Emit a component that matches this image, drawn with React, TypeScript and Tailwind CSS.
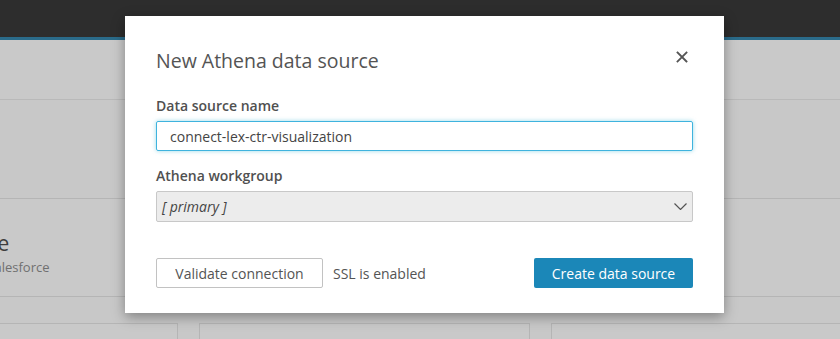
import React from 'react';

const font = { fontFamily: '"Open Sans", "Noto Sans", Arial, sans-serif' };

const BackgroundPage: React.FC = () => (
  <div className="h-[339px] w-[840px] overflow-hidden bg-[#c8c8c8]">
    <div className="h-[37px] bg-[#2d2d2d]" />
    <div className="h-[3px] bg-[#2a6b8a]" />
    <div className="h-[60px] border-b border-[#b9b9b9] bg-[#c9c9c9]" />
    <div className="h-[98px]" />
    {/* data source tiles, dimmed behind the dialog */}
    <div className="flex h-[99px] gap-[20px]">
      <div className="-ml-[100px] w-[480px] shrink-0 border border-[#b5b5b5] bg-[#c9c9c9] pl-[8px] pt-[30px]">
        <div className="text-[21px] leading-[28px] text-[#3d3d3d]">Salesforce</div>
        <div className="ml-[9px] mt-[2px] text-[13px] leading-[16px] text-[#707070]">Connect to Salesforce</div>
      </div>
      <div className="w-[480px] shrink-0 border border-[#b5b5b5] bg-[#c9c9c9]" />
    </div>
    <div className="mt-[26px] flex gap-[21px]">
      <div className="-ml-[2px] h-[40px] w-[180px] shrink-0 border border-[#b5b5b5] bg-[#c9c9c9]" />
      <div className="h-[40px] w-[331px] shrink-0 border border-[#b5b5b5] bg-[#c9c9c9]" />
      <div className="h-[40px] w-[320px] shrink-0 border border-[#b5b5b5] bg-[#c9c9c9]" />
    </div>
  </div>
);

const CloseIcon: React.FC = () => (
  <svg width="12" height="12" viewBox="0 0 12 12" fill="none">
    <path d="M1.5 1.5 L10.5 10.5 M10.5 1.5 L1.5 10.5" stroke="#555" strokeWidth="1.8" strokeLinecap="square" />
  </svg>
);

const Chevron: React.FC = () => (
  <svg width="13" height="7" viewBox="0 0 13 7" fill="none">
    <path d="M0.5 0.5 L6.5 6.5 L12.5 0.5" stroke="#545454" strokeWidth="1.2" />
  </svg>
);

const NewDataSourceDialog: React.FC = () => (
  <div
    className="absolute left-[125px] top-[16px] h-[297px] w-[599px] bg-white px-[31px] pt-[31px] shadow-[0_4px_12px_rgba(0,0,0,0.35)]"
  >
    <div className="flex items-start justify-between">
      <h2 className="text-[19.5px] leading-[28px] text-[#545454]">New Athena data source</h2>
      <button className="mr-[5px] mt-[4px]">
        <CloseIcon />
      </button>
    </div>

    <label className="mt-[21px] block text-[14px] font-semibold leading-[20px] text-[#505050]">
      Data source name
    </label>
    <div className="mt-[5px] flex h-[30px] items-center rounded-[2px] border border-[#3fb3de] px-[13px] shadow-[0_0_4px_rgba(68,185,214,0.55)]">
      <span className="text-[14px] text-[#444]">connect-lex-ctr-visualization</span>
    </div>

    <label className="mt-[15px] block text-[14px] font-semibold leading-[20px] text-[#505050]">
      Athena workgroup
    </label>
    <div className="mt-[5px] flex h-[31px] items-center justify-between rounded-[2px] border border-[#c8c8c8] bg-[#ececec] pl-[5px] pr-[5px]">
      <span className="text-[14px] italic text-[#444]">[ primary ]</span>
      <Chevron />
    </div>

    <div className="mt-[36px] flex items-center">
      <button className="h-[30px] w-[167px] rounded-[2px] border border-[#c2c2c2] bg-white text-[14px] text-[#545454]">
        Validate connection
      </button>
      <span className="ml-[10px] text-[14px] text-[#545454]">SSL is enabled</span>
      <button className="ml-auto h-[30px] w-[159px] rounded-[2px] bg-[#1b87b8] text-[14px] text-white">
        Create data source
      </button>
    </div>
  </div>
);

const App: React.FC = () => (
  <div className="relative h-[339px] w-[840px] overflow-hidden" style={font}>
    <BackgroundPage />
    <NewDataSourceDialog />
  </div>
);

export default App;
